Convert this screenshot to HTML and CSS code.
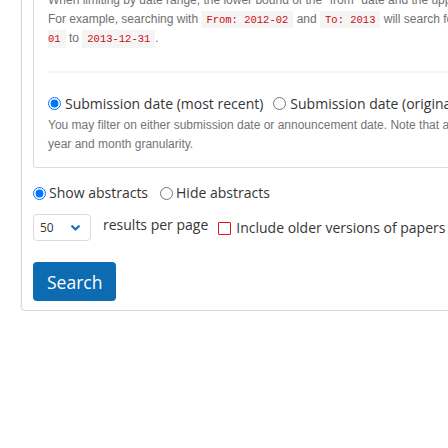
FILE: index.html
```html
<!DOCTYPE html>
<html lang="en">
<head>
<meta charset="utf-8">
<title>Advanced search</title>
<link rel="stylesheet" href="styles.css">
</head>
<body>
<div class="page">
  <form class="outer">
    <fieldset class="inner">
      <p class="note">When limiting by date range, the lower bound of the "from" date and the upper bound of the "to" date are used.<br>For example, searching with <code>From: 2012-02</code> and <code>To: 2013</code> will search for papers submitted from <code class="head">2012-02-</code><br><code class="tail">01</code> to <code>2013-12-31</code>.</p>
      <hr class="rule">
      <div class="choices">
        <label class="radio"><input type="radio" name="date_type" checked>Submission date (most recent)</label>
        <label class="radio"><input type="radio" name="date_type">Submission date (original)</label>
        <label class="radio"><input type="radio" name="date_type">Announcement date</label>
      </div>
      <p class="help">You may filter on either submission date or announcement date. Note that announcement date supports only<br>year and month granularity.</p>
    </fieldset>

    <div class="choices abstracts">
      <label class="radio"><input type="radio" name="abstracts" checked>Show abstracts</label>
      <label class="radio"><input type="radio" name="abstracts">Hide abstracts</label>
    </div>

    <div class="controls">
      <div class="select">
        <span class="select-value">50</span>
        <svg class="chev" width="9" height="6" viewBox="0 0 9 6" aria-hidden="true"><path d="M1.2 1.2 L4.5 4.5 L7.8 1.2" fill="none" stroke="#1c6db5" stroke-width="2.2" stroke-linecap="round" stroke-linejoin="round"/></svg>
      </div>
      <span class="per-page">results per page</span>
      <label class="check"><input type="checkbox" class="box">Include older versions of papers</label>
    </div>

    <button type="button" class="search">Search</button>
  </form>
</div>
</body>
</html>
```

FILE: styles.css
```css
html, body {
  margin: 0;
  padding: 0;
  overflow: hidden;
  background: #ffffff;
}

.page {
  width: 820px;
  margin-top: -44px;
  padding-left: 21px;
}

.outer {
  border: 1px solid #d9d9d9;
  border-radius: 4px;
  box-shadow: 0 1px 2px rgba(10, 10, 10, 0.12);
  padding: 12px 11px 9px;
  font-family: "Open Sans", "Liberation Sans", sans-serif;
  color: #363636;
}

.inner {
  margin: 0;
  border: 1px solid #dcdcdc;
  border-radius: 3px;
  padding: 21px 14px 13px;
  min-width: 0;
}

.note {
  margin: 0;
  font-family: "Liberation Sans", Arial, sans-serif;
  font-size: 12px;
  line-height: 18.5px;
  color: #707070;
  white-space: nowrap;
}

code {
  font-family: "Liberation Mono", "Courier New", monospace;
  font-size: 10.5px;
  color: #cc0a14;
  background: #f5f5f5;
  padding: 2.6px 5px;
}

code.head {
  padding-right: 0;
}

code.tail {
  padding-left: 0;
}

.rule {
  border: 0;
  height: 2px;
  background: #f4f4f4;
  margin: 22px 0 21px;
}

.choices {
  display: flex;
  gap: 10px;
  font-size: 14px;
  line-height: 20px;
  white-space: nowrap;
}

.radio {
  display: inline-flex;
  align-items: center;
  gap: 4px;
}

.radio input {
  margin: 0;
  width: 13px;
  height: 13px;
}

.help {
  margin: 2.5px 0 0;
  font-family: "Liberation Sans", Arial, sans-serif;
  font-size: 12px;
  line-height: 19px;
  color: #747474;
  white-space: nowrap;
}

.abstracts {
  margin-top: 15px;
  gap: 12px;
}

.abstracts .radio {
  gap: 3px;
}

.controls {
  display: flex;
  align-items: flex-start;
  margin-top: 11px;
  font-size: 14px;
  white-space: nowrap;
}

.select {
  box-sizing: border-box;
  width: 58px;
  height: 27px;
  border: 1px solid #dbdbdb;
  border-radius: 4px;
  display: flex;
  align-items: center;
  padding-left: 6px;
  font-size: 12px;
  color: #363636;
}

.select-value {
  width: 31px;
}

.chev {
  display: block;
}

.per-page {
  margin-left: 12px;
  line-height: 20px;
  margin-top: 1px;
}

.check {
  display: inline-flex;
  align-items: center;
  gap: 5px;
  margin-left: 10px;
  margin-top: 4px;
  line-height: 20px;
}

.box {
  -webkit-appearance: none;
  appearance: none;
  margin: 0;
  width: 13px;
  height: 13px;
  box-sizing: border-box;
  border: 1px solid #e0141e;
  border-radius: 1px;
  background: #fff;
}

.search {
  display: block;
  margin-top: 21px;
  height: 39px;
  padding: 0 14px;
  border: 0;
  border-radius: 4px;
  background: #0c6bb1;
  color: #ffffff;
  font-family: "Open Sans", "Liberation Sans", sans-serif;
  font-size: 17.5px;
}
```
